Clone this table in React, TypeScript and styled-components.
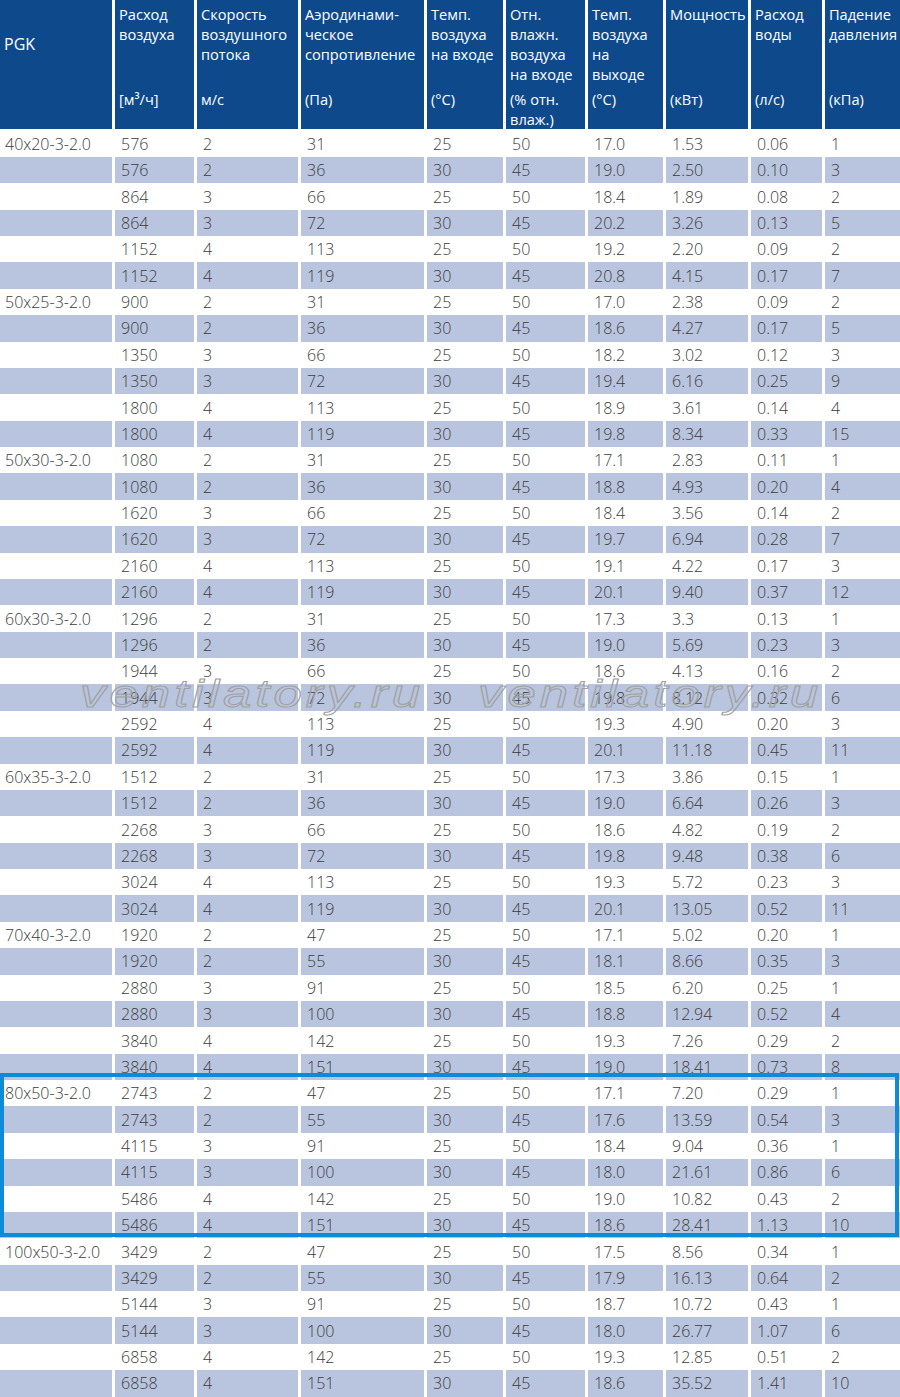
import React from 'react';
import styled, { createGlobalStyle } from 'styled-components';

const GlobalStyle = createGlobalStyle`
  html, body {
    margin: 0;
    padding: 0;
    background: #fff;
    overflow-x: hidden;
  }
  body {
    font-family: "Open Sans", "Noto Sans", sans-serif;
  }
`;

const ROW_H = 26.375;
const COLS = '112px 79px 101px 123px 76px 79px 75px 82px 71px 75px';

const Wrapper = styled.div`
  position: relative;
  width: 900px;
  overflow: hidden;
`;

const Grid = styled.div`
  display: grid;
  grid-template-columns: ${COLS};
  column-gap: 3px;
`;

const HeadRow = styled(Grid)`
  height: 127px;
  margin-bottom: 3.6px;
`;

const HeadCell = styled.div`
  background: #0e4a8b;
  color: #fff;
  font-size: 14.6px;
  line-height: 20px;
  font-weight: 500;
  padding: 4px 0 0 4px;
  display: flex;
  flex-direction: column;
  white-space: nowrap;
`;

const Title = styled.div<{ $center?: boolean }>`
  height: 80px;
  display: flex;
  flex-direction: column;
  justify-content: ${(p) => (p.$center ? 'center' : 'flex-start')};
  font-size: ${(p) => (p.$center ? '16px' : 'inherit')};
`;

const Units = styled.div`
  margin-top: 5px;
`;

const DataRow = styled(Grid)`
  height: ${ROW_H}px;
`;

const Cell = styled.div<{ $shade: boolean }>`
  background: ${(p) => (p.$shade ? '#b9c5df' : '#fff')};
  color: #3c3c3c;
  font-size: 16px;
  font-weight: 300;
  display: flex;
  align-items: center;
  padding-left: 6px;
  white-space: nowrap;
`;

const ModelCell = styled(Cell)`
  padding-left: 5px;
`;

const Highlight = styled.div`
  position: absolute;
  left: 0;
  top: 1073px;
  width: 899px;
  height: 164px;
  box-sizing: border-box;
  border: 4px solid #0b8bd8;
  pointer-events: none;
`;

const Watermark = styled.span<{ $left: number }>`
  position: absolute;
  top: 673px;
  left: ${(p) => p.$left}px;
  font-family: "Liberation Sans", Arial, sans-serif;
  font-style: italic;
  font-size: 38px;
  letter-spacing: 3px;
  color: transparent;
  -webkit-text-stroke: 1px #a0a0a0;
  transform: scaleX(1.34);
  transform-origin: left top;
  pointer-events: none;
  white-space: nowrap;
`;

const headers: { title: string[]; units: string[] }[] = [
  { title: ['Расход', 'воздуха'], units: [' [м³/ч]'] },
  { title: ['Скорость', 'воздушного', 'потока'], units: ['м/с'] },
  { title: ['Аэродинами-', 'ческое', 'сопротивление'], units: ['(Па)'] },
  { title: ['Темп.', 'воздуха', 'на входе'], units: ['(°С)'] },
  { title: ['Отн.', 'влажн.', 'воздуха', 'на входе'], units: ['(% отн.', 'влаж.)'] },
  { title: ['Темп.', 'воздуха', 'на', 'выходе'], units: ['(°С)'] },
  { title: ['Мощность'], units: ['(кВт)'] },
  { title: ['Расход', 'воды'], units: ['(л/с)'] },
  { title: ['Падение', 'давления'], units: ['(кПа)'] },
];

const groups: { model: string; rows: string[] }[] = [
  {
    model: '40x20-3-2.0',
    rows: [
      '576 2 31 25 50 17.0 1.53 0.06 1',
      '576 2 36 30 45 19.0 2.50 0.10 3',
      '864 3 66 25 50 18.4 1.89 0.08 2',
      '864 3 72 30 45 20.2 3.26 0.13 5',
      '1152 4 113 25 50 19.2 2.20 0.09 2',
      '1152 4 119 30 45 20.8 4.15 0.17 7',
    ],
  },
  {
    model: '50x25-3-2.0',
    rows: [
      '900 2 31 25 50 17.0 2.38 0.09 2',
      '900 2 36 30 45 18.6 4.27 0.17 5',
      '1350 3 66 25 50 18.2 3.02 0.12 3',
      '1350 3 72 30 45 19.4 6.16 0.25 9',
      '1800 4 113 25 50 18.9 3.61 0.14 4',
      '1800 4 119 30 45 19.8 8.34 0.33 15',
    ],
  },
  {
    model: '50x30-3-2.0',
    rows: [
      '1080 2 31 25 50 17.1 2.83 0.11 1',
      '1080 2 36 30 45 18.8 4.93 0.20 4',
      '1620 3 66 25 50 18.4 3.56 0.14 2',
      '1620 3 72 30 45 19.7 6.94 0.28 7',
      '2160 4 113 25 50 19.1 4.22 0.17 3',
      '2160 4 119 30 45 20.1 9.40 0.37 12',
    ],
  },
  {
    model: '60x30-3-2.0',
    rows: [
      '1296 2 31 25 50 17.3 3.3 0.13 1',
      '1296 2 36 30 45 19.0 5.69 0.23 3',
      '1944 3 66 25 50 18.6 4.13 0.16 2',
      '1944 3 72 30 45 19.8 8.12 0.32 6',
      '2592 4 113 25 50 19.3 4.90 0.20 3',
      '2592 4 119 30 45 20.1 11.18 0.45 11',
    ],
  },
  {
    model: '60x35-3-2.0',
    rows: [
      '1512 2 31 25 50 17.3 3.86 0.15 1',
      '1512 2 36 30 45 19.0 6.64 0.26 3',
      '2268 3 66 25 50 18.6 4.82 0.19 2',
      '2268 3 72 30 45 19.8 9.48 0.38 6',
      '3024 4 113 25 50 19.3 5.72 0.23 3',
      '3024 4 119 30 45 20.1 13.05 0.52 11',
    ],
  },
  {
    model: '70x40-3-2.0',
    rows: [
      '1920 2 47 25 50 17.1 5.02 0.20 1',
      '1920 2 55 30 45 18.1 8.66 0.35 3',
      '2880 3 91 25 50 18.5 6.20 0.25 1',
      '2880 3 100 30 45 18.8 12.94 0.52 4',
      '3840 4 142 25 50 19.3 7.26 0.29 2',
      '3840 4 151 30 45 19.0 18.41 0.73 8',
    ],
  },
  {
    model: '80x50-3-2.0',
    rows: [
      '2743 2 47 25 50 17.1 7.20 0.29 1',
      '2743 2 55 30 45 17.6 13.59 0.54 3',
      '4115 3 91 25 50 18.4 9.04 0.36 1',
      '4115 3 100 30 45 18.0 21.61 0.86 6',
      '5486 4 142 25 50 19.0 10.82 0.43 2',
      '5486 4 151 30 45 18.6 28.41 1.13 10',
    ],
  },
  {
    model: '100x50-3-2.0',
    rows: [
      '3429 2 47 25 50 17.5 8.56 0.34 1',
      '3429 2 55 30 45 17.9 16.13 0.64 2',
      '5144 3 91 25 50 18.7 10.72 0.43 1',
      '5144 3 100 30 45 18.0 26.77 1.07 6',
      '6858 4 142 25 50 19.3 12.85 0.51 2',
      '6858 4 151 30 45 18.6 35.52 1.41 10',
    ],
  },
];

const App = () => {
  return (
    <>
      <GlobalStyle />
      <Wrapper>
        <HeadRow>
          <HeadCell>
            <Title $center>PGK</Title>
          </HeadCell>
          {headers.map((h, i) => (
            <HeadCell key={i}>
              <Title>
                {h.title.map((t) => (
                  <span key={t}>{t}</span>
                ))}
              </Title>
              <Units>
                {h.units.map((u) => (
                  <div key={u}>{u}</div>
                ))}
              </Units>
            </HeadCell>
          ))}
        </HeadRow>

        {groups.map((g) =>
          g.rows.map((r, ri) => {
            const shade = ri % 2 === 1;
            return (
              <DataRow key={g.model + ri}>
                <ModelCell $shade={shade}>{ri === 0 ? g.model : ''}</ModelCell>
                {r.split(' ').map((v, ci) => (
                  <Cell key={ci} $shade={shade}>
                    {v}
                  </Cell>
                ))}
              </DataRow>
            );
          })
        )}

        <Highlight />
        <Watermark $left={80}>ventilatory.ru</Watermark>
        <Watermark $left={478}>ventilatory.ru</Watermark>
      </Wrapper>
    </>
  );
};

export default App;
